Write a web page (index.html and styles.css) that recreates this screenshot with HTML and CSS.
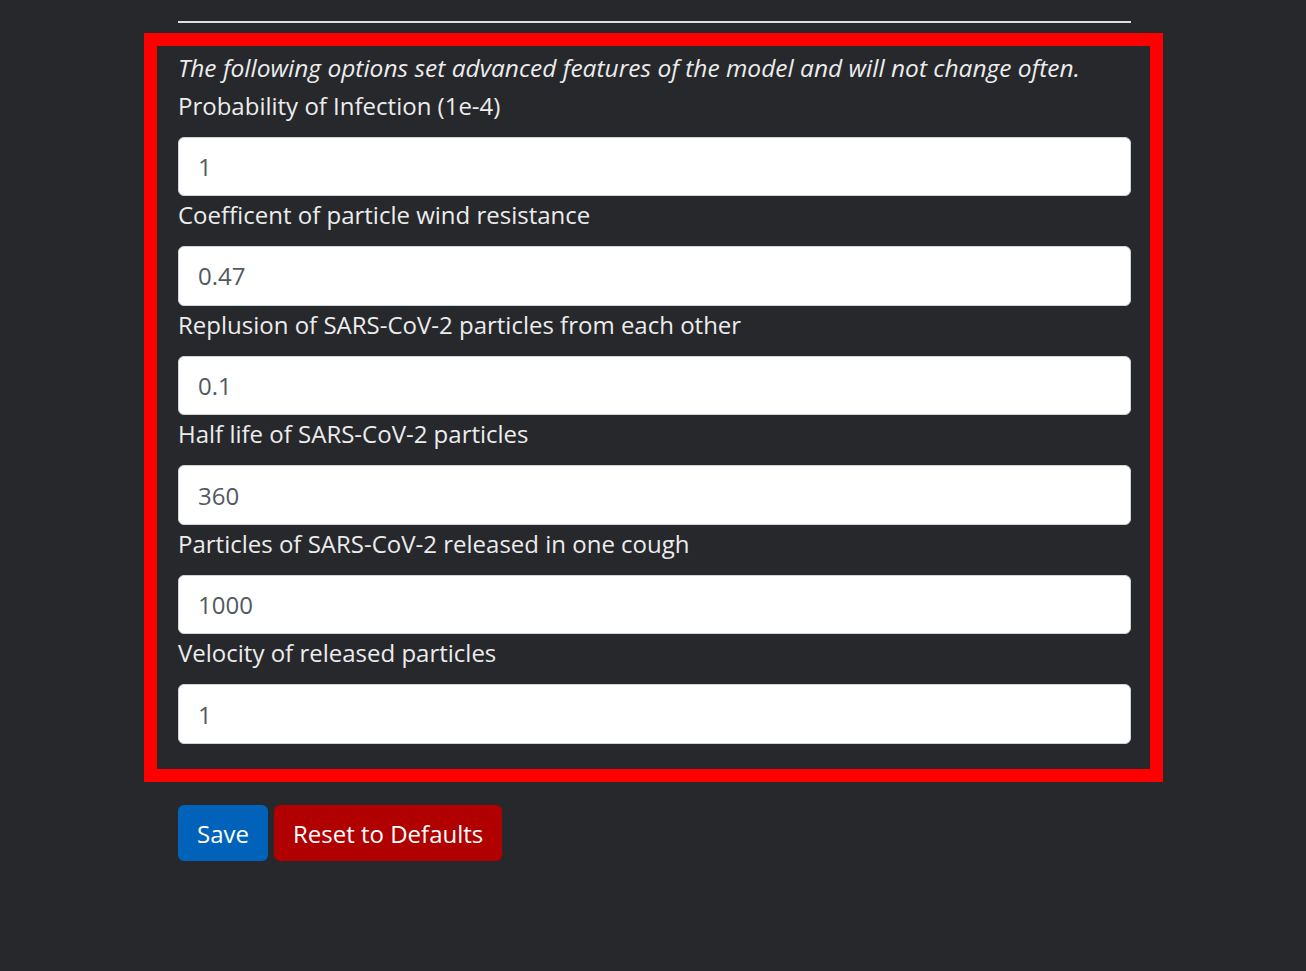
FILE: index.html
```html
<!DOCTYPE html>
<html lang="en">
<head>
<meta charset="utf-8">
<title>Advanced Settings</title>
<link rel="stylesheet" href="styles.css">
</head>
<body>
<div class="container">
  <hr class="divider">
  <div class="advanced">
    <p class="note">The following options set advanced features of the model and will not change often.</p>
    <label class="field-label" for="p1">Probability of Infection (1e-4)</label>
    <input class="field-input" id="p1" type="text" value="1">
    <label class="field-label" for="p2">Coefficent of particle wind resistance</label>
    <input class="field-input" id="p2" type="text" value="0.47">
    <label class="field-label" for="p3">Replusion of SARS-CoV-2 particles from each other</label>
    <input class="field-input" id="p3" type="text" value="0.1">
    <label class="field-label" for="p4">Half life of SARS-CoV-2 particles</label>
    <input class="field-input" id="p4" type="text" value="360">
    <label class="field-label" for="p5">Particles of SARS-CoV-2 released in one cough</label>
    <input class="field-input" id="p5" type="text" value="1000">
    <label class="field-label" for="p6">Velocity of released particles</label>
    <input class="field-input" id="p6" type="text" value="1">
  </div>
  <div class="actions">
    <button class="btn btn-save" type="button">Save</button>
    <button class="btn btn-reset" type="button">Reset to Defaults</button>
  </div>
</div>
</body>
</html>
```
FILE: styles.css
```css
html, body {
  margin: 0;
  padding: 0;
  background: #27282c;
  height: 100%;
}
body {
  font-family: "Open Sans", "Noto Sans", sans-serif;
  color: #ececec;
  font-size: 24px;
}
.container {
  width: 953px;
  margin-left: 178px;
  padding-top: 21px;
}
.divider {
  margin: 0;
  border: 0;
  border-top: 2px solid #dedede;
  height: 0;
}
.advanced {
  margin-top: 10px;
  margin-left: -34px;
  width: 953px;
  border: 13px solid #ff0000;
  padding: 3px 19px 25px 21px;
  box-sizing: content-box;
  display: flex;
  flex-direction: column;
}
.note {
  margin: 0;
  font-style: italic;
  font-size: 24.5px;
  line-height: 37.6px;
}
.field-label {
  display: block;
  line-height: 37.6px;
  margin-bottom: 12.4px;
}
.field-input {
  display: block;
  width: 100%;
  box-sizing: border-box;
  height: 59.6px;
  padding: 0 19px;
  font-family: inherit;
  font-size: 24px;
  color: #52595f;
  background: #fff;
  border: 1px solid #ced4da;
  border-radius: 6px;
}
.actions {
  margin-top: 23px;
  display: flex;
  gap: 6px;
}
.btn {
  height: 56px;
  padding: 0 18px;
  font-family: inherit;
  font-size: 24px;
  color: #fff;
  border: 1px solid transparent;
  border-radius: 6px;
}
.btn-save {
  background: #0062b8;
}
.btn-reset {
  background: #b00000;
}
```
